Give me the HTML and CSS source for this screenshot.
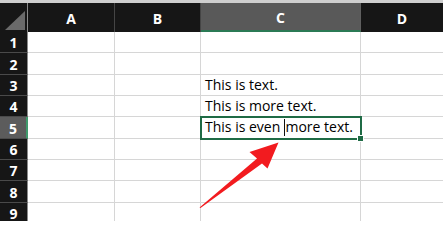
FILE: index.html
```html
<!DOCTYPE html>
<html>
<head>
<meta charset="utf-8">
<link rel="stylesheet" href="styles.css">
</head>
<body>
<div class="topstrip"></div>
<div class="sheet">
  <div class="corner"><span class="tri"></span></div>
  <div class="colhead">A</div>
  <div class="colhead">B</div>
  <div class="colhead sel">C</div>
  <div class="colhead last">D</div>

  <div class="rowhead">1</div><div class="cell"></div><div class="cell"></div><div class="cell"></div><div class="cell last"></div>
  <div class="rowhead">2</div><div class="cell"></div><div class="cell"></div><div class="cell"></div><div class="cell last"></div>
  <div class="rowhead">3</div><div class="cell"></div><div class="cell"></div><div class="cell text">This is text.</div><div class="cell last"></div>
  <div class="rowhead">4</div><div class="cell"></div><div class="cell"></div><div class="cell text">This is more text.</div><div class="cell last"></div>
  <div class="rowhead sel">5</div><div class="cell"></div><div class="cell"></div><div class="cell text active">This is even <span class="caret"></span>more text.<span class="handle"></span></div><div class="cell last"></div>
  <div class="rowhead">6</div><div class="cell"></div><div class="cell"></div><div class="cell"></div><div class="cell last"></div>
  <div class="rowhead">7</div><div class="cell"></div><div class="cell"></div><div class="cell"></div><div class="cell last"></div>
  <div class="rowhead">8</div><div class="cell"></div><div class="cell"></div><div class="cell"></div><div class="cell last"></div>
  <div class="rowhead">9</div><div class="cell"></div><div class="cell"></div><div class="cell"></div><div class="cell last"></div>
</div>
<svg class="arrow" width="443" height="221" viewBox="0 0 443 221">
  <polygon points="278.5,142.5 249.5,152 257,158.5 199.5,207.5 200.5,208 262,163.5 267.5,168.5" fill="#f21b1f"/>
</svg>
</body>
</html>
```
FILE: styles.css
```css
html, body {
  margin: 0;
  padding: 0;
  width: 443px;
  height: 221px;
  overflow: hidden;
  background: #ffffff;
  font-family: "Open Sans", "Liberation Sans", sans-serif;
}
.topstrip {
  height: 3px;
  background: #cfcfcf;
}
.sheet {
  display: grid;
  grid-template-columns: 28px 87px 86px 160px 82px;
  grid-template-rows: 29px 21px 22px 21px 21px 22px 21px 21px 22px 21px;
}
.corner {
  background: #161616;
  border-right: 1px solid #8a8a8a;
  position: relative;
}
.tri {
  position: absolute;
  right: 2px;
  bottom: 2px;
  width: 0;
  height: 0;
  border-left: 20px solid transparent;
  border-bottom: 19px solid #6a6a6a;
}
.colhead {
  background: #161616;
  color: #ffffff;
  font-weight: 700;
  font-size: 14px;
  display: flex;
  align-items: center;
  justify-content: center;
  border-right: 1px solid #454545;
  padding-top: 1px;
}
.colhead.sel {
  background: #595959;
  border-bottom: 2px solid #2b7a55;
  border-right-color: #5f5f5f;
}
.colhead.last {
  border-right: none;
}
.rowhead {
  background: #161616;
  color: #ffffff;
  font-weight: 700;
  font-size: 14px;
  display: flex;
  align-items: center;
  justify-content: center;
  border-bottom: 1px solid #4a4a4a;
  border-right: 1px solid #8a8a8a;
  padding-top: 1px;
}
.rowhead.sel {
  background: #5c5c5c;
  border-right: 2px solid #3f9a6c;
}
.cell {
  border-right: 1px solid #d6d6d6;
  border-bottom: 1px solid #d6d6d6;
  background: #ffffff;
}
.cell.last {
  border-right: none;
}
.text {
  font-size: 14px;
  color: #000000;
  padding-left: 4px;
  white-space: nowrap;
  line-height: 20px;
}
.active {
  position: relative;
  outline: 2px solid #1f6b45;
  outline-offset: -1px;
  z-index: 2;
}
.caret {
  display: inline-block;
  width: 1.5px;
  height: 17px;
  background: #111111;
  vertical-align: -4px;
}
.handle {
  position: absolute;
  right: -4px;
  bottom: -4px;
  width: 5px;
  height: 5px;
  background: #1f6b45;
  border: 1px solid #ffffff;
}
.arrow {
  position: absolute;
  left: 0;
  top: 0;
  z-index: 5;
}
```
